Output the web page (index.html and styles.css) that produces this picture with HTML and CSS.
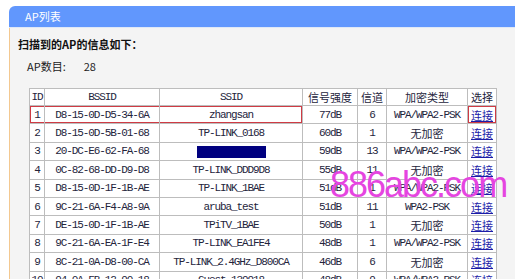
FILE: index.html
```html
<!DOCTYPE html>
<html lang="zh-CN">
<head>
<meta charset="UTF-8" />
<title>AP列表</title>
<link rel="stylesheet" href="styles.css">
</head>
<body>
<div class="panel">
	<div class="panel-head">AP列表</div>
	<div class="panel-body">
		<h2 class="intro">扫描到的AP的信息如下：</h2>
		<p class="count">AP数目:<span class="num">28</span></p>

		<table class="ap-list">
			<colgroup>
				<col style="width:15px"><col style="width:115px"><col style="width:143px"><col style="width:55px"><col style="width:29px"><col style="width:81px"><col style="width:29px">
			</colgroup>
			<thead>
				<tr><th>ID</th><th>BSSID</th><th>SSID</th><th class="cn">信号强度</th><th class="cn">信道</th><th class="cn">加密类型</th><th class="cn">选择</th></tr>
			</thead>
			<tbody>
				<tr class="marked"><td>1</td><td>D8-15-0D-D5-34-6A</td><td>zhangsan</td><td>77dB</td><td>6</td><td>WPA/WPA2-PSK</td><td class="cn pick"><a href="#">连接</a></td></tr>
				<tr><td>2</td><td>D8-15-0D-5B-01-68</td><td>TP-LINK_0168</td><td>60dB</td><td>1</td><td class="cn">无加密</td><td class="cn"><a href="#">连接</a></td></tr>
				<tr><td>3</td><td>20-DC-E6-62-FA-68</td><td><span class="hidden-ssid"></span></td><td>59dB</td><td>13</td><td>WPA/WPA2-PSK</td><td class="cn"><a href="#">连接</a></td></tr>
				<tr><td>4</td><td>0C-82-68-DD-D9-D8</td><td>TP-LINK_DDD9D8</td><td>55dB</td><td>11</td><td class="cn">无加密</td><td class="cn"><a href="#">连接</a></td></tr>
				<tr><td>5</td><td>D8-15-0D-1F-1B-AE</td><td>TP-LINK_1BAE</td><td>51dB</td><td>1</td><td>WPA/WPA2-PSK</td><td class="cn"><a href="#">连接</a></td></tr>
				<tr><td>6</td><td>9C-21-6A-F4-A8-9A</td><td>aruba_test</td><td>51dB</td><td>11</td><td>WPA2-PSK</td><td class="cn"><a href="#">连接</a></td></tr>
				<tr><td>7</td><td>DE-15-0D-1F-1B-AE</td><td>TPiTV_1BAE</td><td>50dB</td><td>1</td><td class="cn">无加密</td><td class="cn"><a href="#">连接</a></td></tr>
				<tr><td>8</td><td>9C-21-6A-EA-1F-E4</td><td>TP-LINK_EA1FE4</td><td>48dB</td><td>1</td><td>WPA/WPA2-PSK</td><td class="cn"><a href="#">连接</a></td></tr>
				<tr><td>9</td><td>8C-21-0A-D8-00-CA</td><td>TP-LINK_2.4GHz_D800CA</td><td>46dB</td><td>6</td><td class="cn">无加密</td><td class="cn"><a href="#">连接</a></td></tr>
				<tr><td>10</td><td>94-0A-FB-12-90-18</td><td>Guest_139918</td><td>48dB</td><td>9</td><td>WPA/WPA2-PSK</td><td class="cn"><a href="#">连接</a></td></tr>
			</tbody>
		</table>
	</div>
	<div class="watermark">886abc.com</div>
</div>
</body>
</html>
```

FILE: styles.css
```css
* {
	margin: 0;
	padding: 0;
}

body {
	background: #fff;
	font: 11px "Noto Sans CJK SC", sans-serif;
	color: #222;
}

.panel {
	position: relative;
	margin: 6px 0 0 9px;
}

.panel-head {
	height: 21px;
	line-height: 21px;
	padding-left: 16px;
	background: #6197fd;
	color: #fff;
	border-radius: 6px 0 0 0;
	border-bottom: 1px solid #dfe8f7;
}

.panel-body {
	height: 260px;
	padding: 8px 0 0 8px;
	background: #f4f4f4;
	border-left: 1px solid #f3c890;
}

.intro {
	font-size: 11px;
	font-weight: bold;
	line-height: 16px;
	color: #111;
}

.count {
	margin: 6px 0 0 9px;
	line-height: 16px;
	color: #222;
}

.count .num {
	margin-left: 18px;
}

.ap-list {
	margin: 14px 0 0 11px;
	table-layout: fixed;
	width: 468px;
	border-collapse: collapse;
	background: #fff;
	color: #24243c;
	font: 11px "Liberation Mono", "Noto Sans CJK SC", monospace;
	letter-spacing: -1.1px;
}

.ap-list th, .ap-list td {
	border: 1px solid #bdbdbd;
	text-align: center;
	white-space: nowrap;
	overflow: hidden;
	font-weight: normal;
}

.ap-list th {
	height: 16px;
}

.ap-list td {
	height: 17.4px;
}

.ap-list .cn {
	font: 11px "Noto Sans CJK SC", sans-serif;
	letter-spacing: 0;
}

.ap-list a {
	color: #1c1ca8;
}

.marked td:nth-child(1) {
	box-shadow: inset 1px 1px 0 #cf3b44, inset 0 -1px 0 #cf3b44;
}

.marked td:nth-child(2) {
	box-shadow: inset 0 1px 0 #cf3b44, inset 0 -1px 0 #cf3b44;
}

.marked td:nth-child(3) {
	box-shadow: inset -1px 1px 0 #cf3b44, inset 0 -1px 0 #cf3b44;
}

.marked td.pick {
	box-shadow: inset 0 0 0 1px #cf3b44;
}

.hidden-ssid {
	display: inline-block;
	width: 69px;
	height: 12px;
	vertical-align: middle;
	background: #00007f;
}

.watermark {
	position: absolute;
	left: 321px;
	top: 161px;
	font: 36px/36px "Liberation Sans", sans-serif;
	letter-spacing: -2px;
	color: #e545e0;
}
```
